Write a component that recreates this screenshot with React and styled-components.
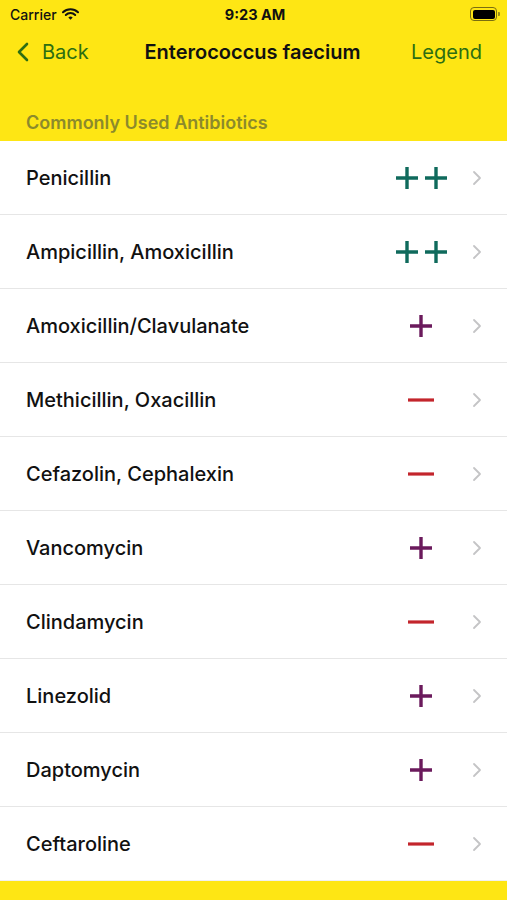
import React from "react";
import styled, { createGlobalStyle } from "styled-components";

const GlobalStyle = createGlobalStyle`
  html, body {
    margin: 0;
    padding: 0;
    background: #fee614;
    font-family: Inter, "Liberation Sans", sans-serif;
  }
`;

const Screen = styled.div`
  width: 507px;
  height: 900px;
  background: #fee614;
  display: flex;
  flex-direction: column;
  overflow: hidden;
`;

const StatusBar = styled.div`
  height: 28px;
  display: grid;
  grid-template-columns: 1fr auto 1fr;
  align-items: center;
  padding: 0 7px 0 10px;
  font-size: 14px;
  color: #111;
`;

const Carrier = styled.div`
  display: flex;
  align-items: center;
  gap: 5px;
  font-weight: 500;
`;

const Clock = styled.div`
  font-weight: 700;
  font-size: 14.5px;
`;

const Battery = styled.div`
  justify-self: end;
  display: flex;
  align-items: center;
  gap: 1px;
`;

const BatteryBody = styled.div`
  width: 22px;
  height: 9px;
  border: 1.5px solid #7a6e10;
  border-radius: 4px;
  padding: 1.5px;
  display: flex;
  & > div {
    flex: 1;
    background: #000;
    border-radius: 2px;
  }
`;

const BatteryTip = styled.div`
  width: 2px;
  height: 4px;
  background: #9a8d18;
  border-radius: 0 1px 1px 0;
`;

const NavBar = styled.div`
  height: 48px;
  display: grid;
  grid-template-columns: 1fr auto 1fr;
  align-items: center;
  padding: 0 25px 0 17px;
`;

const NavButton = styled.div`
  display: flex;
  align-items: center;
  gap: 13px;
  color: #2d6e12;
  font-size: 20px;
  justify-self: ${(p) => (p.$end ? "end" : "start")};
`;

const Title = styled.div`
  font-weight: 600;
  font-size: 20px;
  color: #111;
  padding-left: 6px;
`;

const SectionHeader = styled.div`
  padding: 36px 26px 8px;
  font-size: 18px;
  font-weight: 600;
  color: #8c8a2c;
`;

const List = styled.div`
  background: #fff;
  display: flex;
  flex-direction: column;
`;

const Row = styled.div`
  height: 73px;
  display: flex;
  align-items: center;
  padding-left: 26px;
  border-bottom: 1px solid #e6e6e6;
  &:last-child {
    border-bottom-color: #f0f0f0;
  }
`;

const RowInner = styled.div`
  flex: 1;
  display: flex;
  align-items: center;
  padding-right: 25px;
`;

const Name = styled.div`
  flex: 1;
  font-size: 20px;
  font-weight: 500;
  color: #111;
`;

const Rating = styled.div`
  width: 54px;
  display: flex;
  justify-content: center;
  gap: 5px;
  margin-right: 24px;
`;

const colors = {
  strong: "#0f6a5c",
  plus: "#6b1a5c",
  minus: "#c3252c",
};

const Plus = ({ color }) => (
  <svg width="24" height="24" viewBox="0 0 24 24">
    <path d="M12 1v22M1 12h22" stroke={color} strokeWidth="3.4" />
  </svg>
);

const Minus = ({ color }) => (
  <svg width="26" height="24" viewBox="0 0 26 24">
    <path d="M0 12h26" stroke={color} strokeWidth="3.2" />
  </svg>
);

const Chevron = () => (
  <svg width="10" height="16" viewBox="0 0 10 16">
    <path d="M2 2l6 6-6 6" fill="none" stroke="#c4c4c6" strokeWidth="1.8" strokeLinecap="round" strokeLinejoin="round" />
  </svg>
);

const drugs = [
  ["Penicillin", "++"],
  ["Ampicillin, Amoxicillin", "++"],
  ["Amoxicillin/Clavulanate", "+"],
  ["Methicillin, Oxacillin", "-"],
  ["Cefazolin, Cephalexin", "-"],
  ["Vancomycin", "+"],
  ["Clindamycin", "-"],
  ["Linezolid", "+"],
  ["Daptomycin", "+"],
  ["Ceftaroline", "-"],
];

const RatingMark = ({ value }) => {
  if (value === "++")
    return (
      <Rating>
        <Plus color={colors.strong} />
        <Plus color={colors.strong} />
      </Rating>
    );
  if (value === "+")
    return (
      <Rating>
        <Plus color={colors.plus} />
      </Rating>
    );
  return (
    <Rating>
      <Minus color={colors.minus} />
    </Rating>
  );
};

const App = () => (
  <>
    <GlobalStyle />
    <Screen>
      <StatusBar>
        <Carrier>
          Carrier
          <svg width="17" height="12" viewBox="0 0 17 12">
            <path d="M1 4.2a10.8 10.8 0 0 1 15 0" fill="none" stroke="#111" strokeWidth="2" strokeLinecap="round" />
            <path d="M3.8 7a6.8 6.8 0 0 1 9.4 0" fill="none" stroke="#111" strokeWidth="2" strokeLinecap="round" />
            <path d="M6.3 9.6l2.2 2.2 2.2-2.2a3.1 3.1 0 0 0-4.4 0z" fill="#111" />
          </svg>
        </Carrier>
        <Clock>9:23 AM</Clock>
        <Battery>
          <BatteryBody>
            <div />
          </BatteryBody>
          <BatteryTip />
        </Battery>
      </StatusBar>
      <NavBar>
        <NavButton>
          <svg width="12" height="20" viewBox="0 0 12 20">
            <path d="M10 2L2 10l8 8" fill="none" stroke="#2d6e12" strokeWidth="2.6" strokeLinecap="round" strokeLinejoin="round" />
          </svg>
          Back
        </NavButton>
        <Title>Enterococcus faecium</Title>
        <NavButton $end>Legend</NavButton>
      </NavBar>
      <SectionHeader>Commonly Used Antibiotics</SectionHeader>
      <List>
        {drugs.map(([name, value]) => (
          <Row key={name}>
            <RowInner>
              <Name>{name}</Name>
              <RatingMark value={value} />
              <Chevron />
            </RowInner>
          </Row>
        ))}
      </List>
    </Screen>
  </>
);

export default App;
